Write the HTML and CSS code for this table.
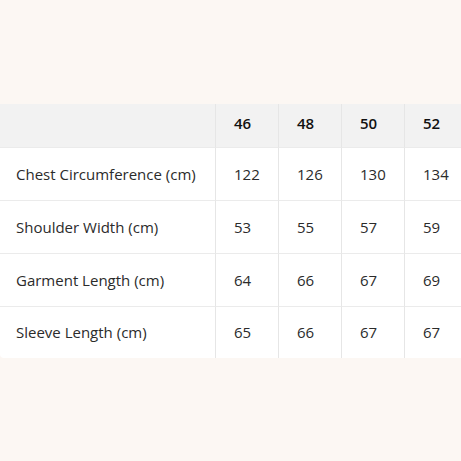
FILE: index.html
```html
<!DOCTYPE html>
<html lang="en">
<head>
<meta charset="utf-8">
<link rel="stylesheet" href="styles.css">
</head>
<body>
<main class="page">
  <div class="table-wrap">
    <table class="size-table">
      <thead>
        <tr>
          <th class="label"></th>
          <th>46</th>
          <th>48</th>
          <th>50</th>
          <th>52</th>
        </tr>
      </thead>
      <tbody>
        <tr><td class="label">Chest Circumference (cm)</td><td>122</td><td>126</td><td>130</td><td>134</td></tr>
        <tr><td class="label">Shoulder Width (cm)</td><td>53</td><td>55</td><td>57</td><td>59</td></tr>
        <tr><td class="label">Garment Length (cm)</td><td>64</td><td>66</td><td>67</td><td>69</td></tr>
        <tr><td class="label">Sleeve Length (cm)</td><td>65</td><td>66</td><td>67</td><td>67</td></tr>
      </tbody>
    </table>
  </div>
</main>
</body>
</html>
```

FILE: styles.css
```css
html, body {
  margin: 0;
  padding: 0;
  background: #fcf7f3;
  overflow: hidden;
}
.page {
  height: 461px;
  display: flex;
  align-items: center;
}
.table-wrap {
  width: 461px;
  overflow: hidden;
}
.size-table {
  border-collapse: separate;
  border-spacing: 0;
  background: #fff;
  border-radius: 4px;
  font-family: "Open Sans", "Noto Sans", sans-serif;
  font-size: 15px;
  color: #2b2b2b;
  table-layout: fixed;
  width: 466px;
}
.size-table th,
.size-table td {
  text-align: left;
  padding: 0 0 0 18px;
  border-left: 1px solid #e6e6e6;
  border-bottom: 1px solid #ebebeb;
  width: 63px;
  box-sizing: border-box;
  white-space: nowrap;
}
.size-table th.label,
.size-table td.label {
  width: 215px;
  border-left: none;
  padding-left: 16px;
}
.size-table th {
  background: #f2f2f2;
  font-weight: 600;
  color: #111;
  height: 44px;
  padding-bottom: 4px;
}
.size-table td {
  height: 53px;
}
.size-table tbody tr:last-child td {
  border-bottom: none;
  height: 51px;
}
.size-table tbody tr:last-child td.label {
  border-bottom-left-radius: 4px;
}
```
